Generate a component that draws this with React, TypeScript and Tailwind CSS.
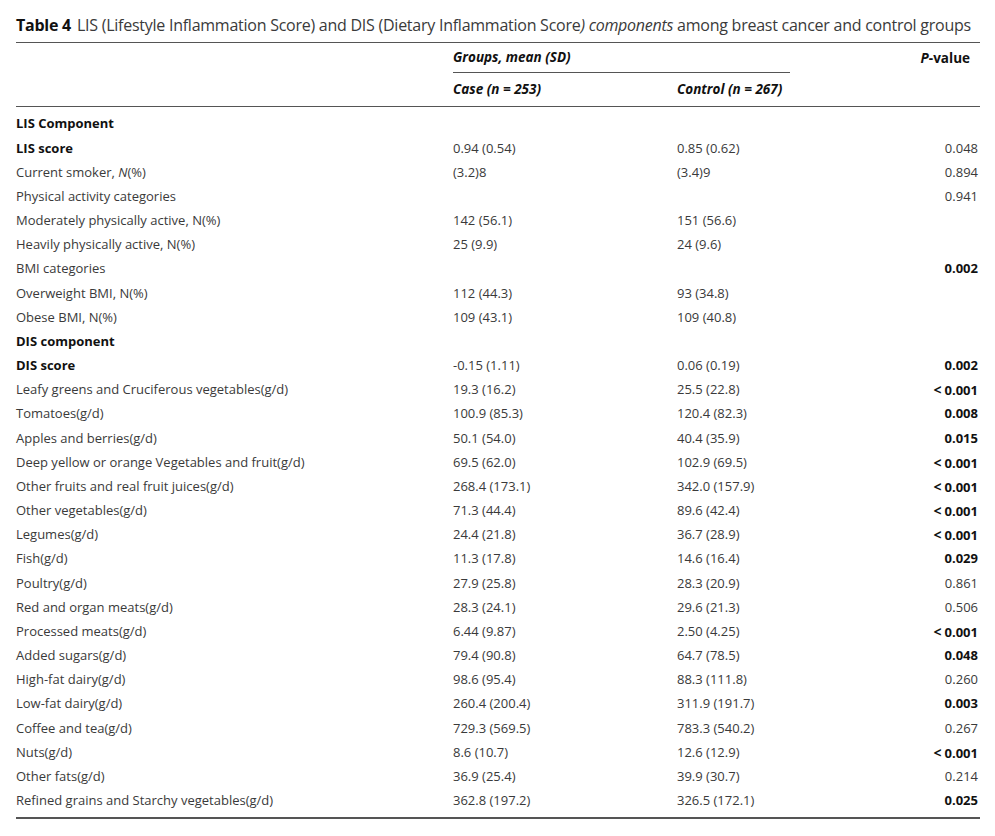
import type { ReactNode } from "react";

interface Row {
  label: ReactNode;
  case?: string;
  control?: string;
  p?: string;
  strong?: boolean;
  sigP?: boolean;
}

const rows: Row[] = [
  { label: "LIS Component", strong: true },
  { label: "LIS score", case: "0.94 (0.54)", control: "0.85 (0.62)", p: "0.048", strong: true },
  {
    label: (
      <>
        Current smoker, <i>N</i>(%)
      </>
    ),
    case: "(3.2)8",
    control: "(3.4)9",
    p: "0.894",
  },
  { label: "Physical activity categories", p: "0.941" },
  { label: "Moderately physically active, N(%)", case: "142 (56.1)", control: "151 (56.6)" },
  { label: "Heavily physically active, N(%)", case: "25 (9.9)", control: "24 (9.6)" },
  { label: "BMI categories", p: "0.002", sigP: true },
  { label: "Overweight BMI, N(%)", case: "112 (44.3)", control: "93 (34.8)" },
  { label: "Obese BMI, N(%)", case: "109 (43.1)", control: "109 (40.8)" },
  { label: "DIS component", strong: true },
  { label: "DIS score", case: "-0.15 (1.11)", control: "0.06 (0.19)", p: "0.002", strong: true, sigP: true },
  { label: "Leafy greens and Cruciferous vegetables(g/d)", case: "19.3 (16.2)", control: "25.5 (22.8)", p: "<0.001", sigP: true },
  { label: "Tomatoes(g/d)", case: "100.9 (85.3)", control: "120.4 (82.3)", p: "0.008", sigP: true },
  { label: "Apples and berries(g/d)", case: "50.1 (54.0)", control: "40.4 (35.9)", p: "0.015", sigP: true },
  { label: "Deep yellow or orange Vegetables and fruit(g/d)", case: "69.5 (62.0)", control: "102.9 (69.5)", p: "<0.001", sigP: true },
  { label: "Other fruits and real fruit juices(g/d)", case: "268.4 (173.1)", control: "342.0 (157.9)", p: "<0.001", sigP: true },
  { label: "Other vegetables(g/d)", case: "71.3 (44.4)", control: "89.6 (42.4)", p: "<0.001", sigP: true },
  { label: "Legumes(g/d)", case: "24.4 (21.8)", control: "36.7 (28.9)", p: "<0.001", sigP: true },
  { label: "Fish(g/d)", case: "11.3 (17.8)", control: "14.6 (16.4)", p: "0.029", sigP: true },
  { label: "Poultry(g/d)", case: "27.9 (25.8)", control: "28.3 (20.9)", p: "0.861" },
  { label: "Red and organ meats(g/d)", case: "28.3 (24.1)", control: "29.6 (21.3)", p: "0.506" },
  { label: "Processed meats(g/d)", case: "6.44 (9.87)", control: "2.50 (4.25)", p: "<0.001", sigP: true },
  { label: "Added sugars(g/d)", case: "79.4 (90.8)", control: "64.7 (78.5)", p: "0.048", sigP: true },
  { label: "High-fat dairy(g/d)", case: "98.6 (95.4)", control: "88.3 (111.8)", p: "0.260" },
  { label: "Low-fat dairy(g/d)", case: "260.4 (200.4)", control: "311.9 (191.7)", p: "0.003", sigP: true },
  { label: "Coffee and tea(g/d)", case: "729.3 (569.5)", control: "783.3 (540.2)", p: "0.267" },
  { label: "Nuts(g/d)", case: "8.6 (10.7)", control: "12.6 (12.9)", p: "<0.001", sigP: true },
  { label: "Other fats(g/d)", case: "36.9 (25.4)", control: "39.9 (30.7)", p: "0.214" },
  { label: "Refined grains and Starchy vegetables(g/d)", case: "362.8 (197.2)", control: "326.5 (172.1)", p: "0.025", sigP: true },
];

function PValue({ value, sig }: { value?: string; sig?: boolean }) {
  if (!value) return null;
  if (value.startsWith("<")) {
    return (
      <span className="font-bold text-[#111]">
        <span className="text-[14px]">&lt;</span>
        <span className="ml-[3px]">{value.slice(1)}</span>
      </span>
    );
  }
  return <span className={sig ? "font-bold text-[#111]" : ""}>{value}</span>;
}

export default function App() {
  return (
    <div className="min-h-screen bg-white font-['Open_Sans',sans-serif] text-[#3a3a3a]">
      <div className="ml-4 w-[964px] pt-[14px]">
        <p className="text-[16px] leading-[22px] tracking-[-0.25px] whitespace-nowrap">
          <span className="font-bold text-[#111]">Table 4</span>
          <span className="ml-[6px]">
            LIS (Lifestyle Inflammation Score) and DIS (Dietary Inflammation Score<i>) components</i> among breast cancer and
            control groups
          </span>
        </p>

        <div className="mt-[6px] border-t border-[#555]">
          <div className="grid grid-cols-[437px_337px_1fr] text-[13.5px] font-bold italic text-[#111]">
            <div />
            <div className="flex h-[30px] items-center border-b border-[#555]">Groups, mean (SD)</div>
            <div className="flex h-[30px] items-center justify-end pr-[10px]">
              <span>P</span>
              <span className="not-italic">-value</span>
            </div>
          </div>
          <div className="grid h-[33px] grid-cols-[437px_224px_1fr] items-center text-[13.5px] font-bold italic text-[#111]">
            <div />
            <div>Case (n = 253)</div>
            <div>Control (n = 267)</div>
          </div>
        </div>

        <div className="border-t border-[#555] pt-[5px] pb-[4px] text-[13px]">
          {rows.map((row, i) => (
            <div key={i} className="grid h-[24.18px] grid-cols-[437px_224px_1fr_100px] items-center whitespace-nowrap">
              <div className={row.strong ? "font-bold text-[#111]" : ""}>{row.label}</div>
              <div>{row.case}</div>
              <div>{row.control}</div>
              <div className="pr-[2px] text-right">
                <PValue value={row.p} sig={row.sigP} />
              </div>
            </div>
          ))}
        </div>
        <div className="border-t-2 border-[#555]" />
      </div>
    </div>
  );
}
